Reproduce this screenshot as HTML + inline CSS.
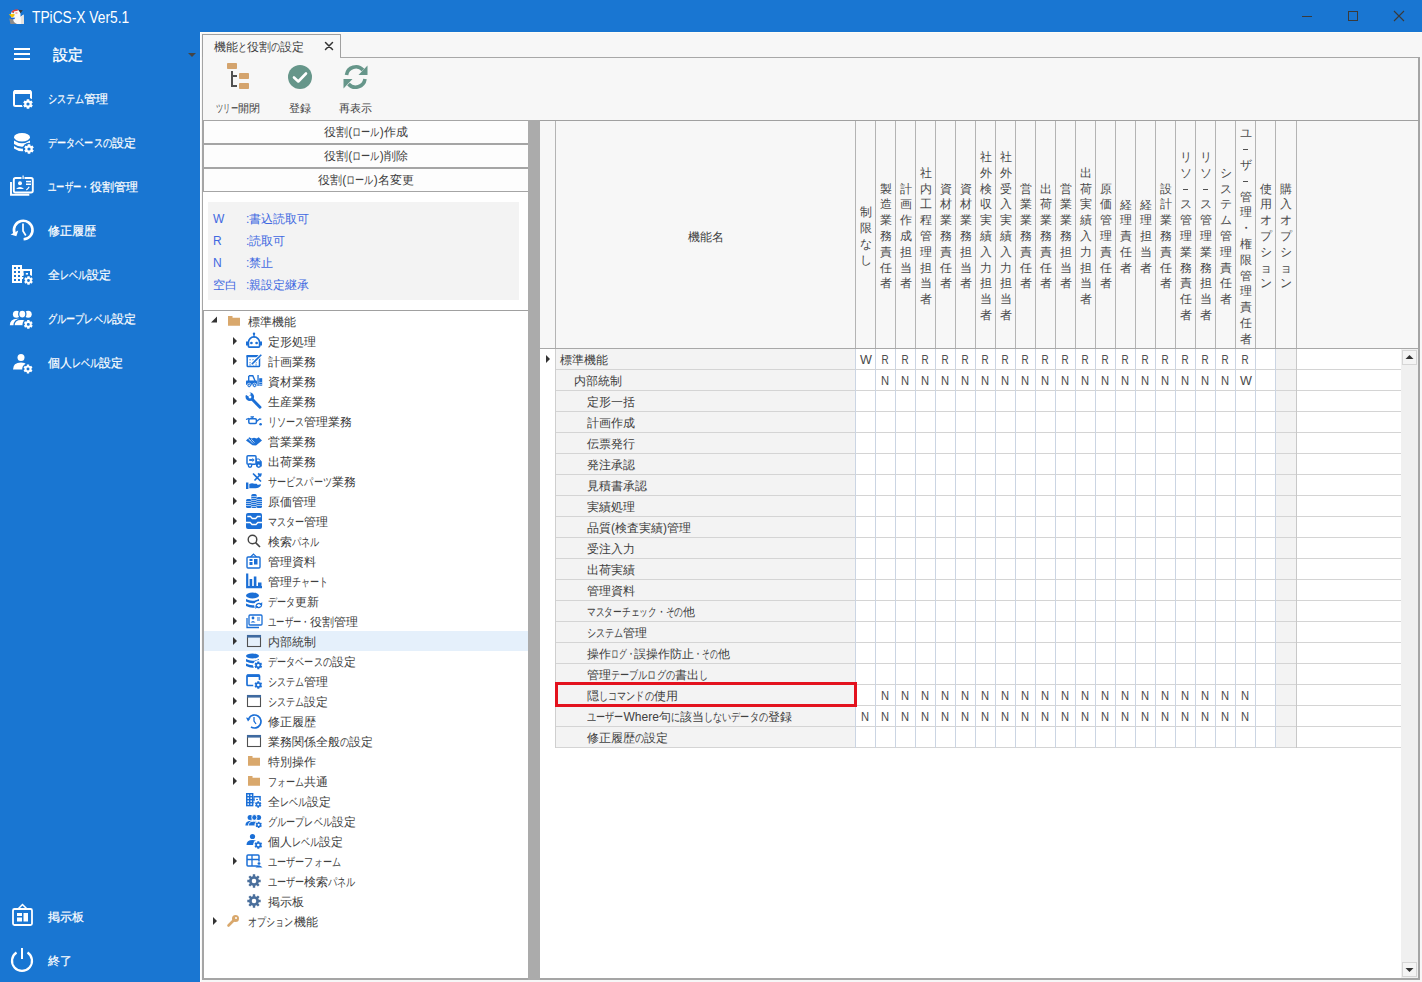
<!DOCTYPE html><html><head><meta charset="utf-8"><title>TPiCS-X</title><style>
*{box-sizing:border-box;margin:0;padding:0}
html,body{width:1422px;height:982px;overflow:hidden;background:#f7f7f7;font-family:"Liberation Sans", sans-serif;font-size:12px;color:#404040}
.a{position:absolute}
.t{position:absolute;white-space:nowrap;line-height:1}
svg{position:absolute;overflow:visible}
.k{display:inline-block;vertical-align:top;white-space:nowrap}
.k>span{display:inline-block;transform-origin:0 0}
.vt{position:absolute;width:20px;text-align:center;line-height:15.8px;font-size:12px;color:#4a4a4a}
</style></head><body><div class="a" style="left:0;top:0;width:1422px;height:32px;background:#1976d2"></div>
<div class="a" style="left:0;top:32px;width:200px;height:950px;background:#1976d2"></div>
<div class="t" style="left:32.0px;top:9.6px;font-size:16.0px;color:#fff;transform:scaleX(0.86);transform-origin:0 0">TPiCS-X Ver5.1</div>
<div class="t" style="left:53.0px;top:46.9px;font-size:15.3px;color:#fff;-webkit-text-stroke:0.35px #fff">設定</div>
<div class="t" style="left:48.0px;top:92.5px;font-size:12.0px;color:#fff;-webkit-text-stroke:0.2px #fff"><span class="k" style="width:36.48px"><span style="transform:scaleX(0.760)">システム</span></span>管理</div>
<div class="t" style="left:48.0px;top:136.5px;font-size:12.0px;color:#fff;-webkit-text-stroke:0.2px #fff"><span class="k" style="width:63.84px"><span style="transform:scaleX(0.760)">データベースの</span></span>設定</div>
<div class="t" style="left:48.0px;top:180.5px;font-size:12.0px;color:#fff;-webkit-text-stroke:0.2px #fff"><span class="k" style="width:41.52px"><span style="transform:scaleX(0.692)">ユーザー・</span></span>役割管理</div>
<div class="t" style="left:48.0px;top:224.5px;font-size:12.0px;color:#fff;-webkit-text-stroke:0.2px #fff">修正履歴</div>
<div class="t" style="left:48.0px;top:268.5px;font-size:12.0px;color:#fff;-webkit-text-stroke:0.2px #fff">全<span class="k" style="width:27.36px"><span style="transform:scaleX(0.760)">レベル</span></span>設定</div>
<div class="t" style="left:48.0px;top:312.5px;font-size:12.0px;color:#fff;-webkit-text-stroke:0.2px #fff"><span class="k" style="width:63.84px"><span style="transform:scaleX(0.760)">グループレベル</span></span>設定</div>
<div class="t" style="left:48.0px;top:356.5px;font-size:12.0px;color:#fff;-webkit-text-stroke:0.2px #fff">個人<span class="k" style="width:27.36px"><span style="transform:scaleX(0.760)">レベル</span></span>設定</div>
<div class="t" style="left:48.0px;top:910.5px;font-size:12.0px;color:#fff;-webkit-text-stroke:0.2px #fff">掲示板</div>
<div class="t" style="left:48.0px;top:954.5px;font-size:12.0px;color:#fff;-webkit-text-stroke:0.2px #fff">終了</div>
<svg class="a" style="left:0;top:0" width="1422" height="982" viewBox="0 0 1422 982"><path d="M11 24 L11 13 Q12 10 15 10 L18.5 10 Q20.5 11 20.5 14 L20.5 16.8 L23.6 14.6 L24 24 Z" fill="#fafafa"/><path d="M20.8 17 L23.6 14.6 L24 24 L21 24 Z" fill="#e6e3df"/><path d="M9.3 18.6 L13.2 19 Q13 22.3 17 24 L10.4 24 Z" fill="#8c8c8c"/><path d="M18.2 9.8 L22.8 10.3 L20.6 13.2 Z" fill="#3a3a3a"/><path d="M11.3 12.3 Q12.8 9.3 17.8 9.3 L17.8 10.8 Q14 10.9 12.5 12.8 Z" fill="#e43a3a"/><path d="M8.8 14.2 L14.6 14 L14.2 16.3 L11.8 17.6 Z" fill="#f6c200"/><path d="M10.2 17.6 L15.2 17.8 L14.2 19.2 L11 19 Z" fill="#1a62d4"/><circle cx="13.4" cy="12.6" r="0.7" fill="#666"/><ellipse cx="16.4" cy="13" rx="1.3" ry="0.7" fill="#f29090"/><line x1="1302" y1="16.5" x2="1312" y2="16.5" stroke="#3a3a3a" stroke-width="1"/><rect x="1348.5" y="11.5" width="9" height="9" fill="none" stroke="#3a3a3a" stroke-width="1"/><path d="M1394 11 L1404 21 M1404 11 L1394 21" stroke="#3a3a3a" stroke-width="1.1"/><rect x="14" y="48.0" width="16" height="2" fill="#fff"/><rect x="14" y="53.0" width="16" height="2" fill="#fff"/><rect x="14" y="58.0" width="16" height="2" fill="#fff"/><path d="M188 53 L196 53 L192 57 Z" fill="#444"/><rect x="14" y="91" width="17" height="15" rx="1.5" fill="none" stroke="#fff" stroke-width="2"/><rect x="14" y="90" width="17" height="4" rx="1" fill="#fff"/><circle cx="28.00" cy="104.00" r="6.20" fill="#1976d2"/><path fill-rule="evenodd" fill="#fff" d="M26.71 99.17 L29.29 99.17 L29.29 100.42 L30.45 101.10 L31.54 100.46 L32.83 102.71 L31.74 103.33 L31.74 104.67 L32.83 105.29 L31.54 107.54 L30.45 106.90 L29.29 107.58 L29.29 108.83 L26.71 108.83 L26.71 107.58 L25.55 106.90 L24.46 107.54 L23.17 105.29 L24.26 104.67 L24.26 103.33 L23.17 102.71 L24.46 100.46 L25.55 101.10 L26.71 100.42 Z M26.40 104.00 a1.60 1.60 0 1 0 3.20 0 a1.60 1.60 0 1 0 -3.20 0 Z"/><ellipse cx="22" cy="137.3" rx="8" ry="4.2" fill="#fff"/><path d="M14 140.5 Q22 146 30 140.5 L30 144 Q22 149.5 14 144 Z" fill="#fff"/><path d="M14 146 Q22 151.5 30 146 L30 148.5 Q22 154 14 148.5 Z" fill="#fff"/><circle cx="29.00" cy="149.00" r="6.20" fill="#1976d2"/><path fill-rule="evenodd" fill="#fff" d="M27.71 144.17 L30.29 144.17 L30.29 145.42 L31.45 146.10 L32.54 145.46 L33.83 147.71 L32.74 148.33 L32.74 149.67 L33.83 150.29 L32.54 152.54 L31.45 151.90 L30.29 152.58 L30.29 153.83 L27.71 153.83 L27.71 152.58 L26.55 151.90 L25.46 152.54 L24.17 150.29 L25.26 149.67 L25.26 148.33 L24.17 147.71 L25.46 145.46 L26.55 146.10 L27.71 145.42 Z M27.40 149.00 a1.60 1.60 0 1 0 3.20 0 a1.60 1.60 0 1 0 -3.20 0 Z"/><rect x="13.8" y="178" width="19" height="14.5" rx="1.8" fill="none" stroke="#fff" stroke-width="1.9"/><rect x="21.5" y="176" width="3" height="3.5" fill="#1976d2"/><rect x="22.5" y="175.5" width="1.2" height="3.5" fill="#fff"/><path d="M11 182 L11 194.8 L29.3 194.8" fill="none" stroke="#fff" stroke-width="1.9"/><circle cx="20" cy="183.2" r="2" fill="#fff"/><path d="M16 189 Q20 184.8 24 189 Z" fill="#fff"/><rect x="26" y="180.8" width="5" height="1.5" fill="#fff"/><rect x="26" y="183.5" width="5" height="1.5" fill="#fff"/><path d="M26.3 190 Q28 189 29.2 186.8" fill="none" stroke="#fff" stroke-width="1.2"/><path d="M23.6 239.3 A9.3 9.3 0 1 0 14.4 233" fill="none" stroke="#fff" stroke-width="2.6"/><path d="M10.6 234.6 L18.2 230.6 L16.4 236.2 Z" fill="#fff"/><path d="M23 223.5 L23 231 L25.8 235.5" fill="none" stroke="#fff" stroke-width="1.7"/><rect x="12" y="265" width="10" height="18" fill="#fff"/><rect x="14" y="267" width="2" height="2" fill="#1976d2"/><rect x="14" y="271" width="2" height="2" fill="#1976d2"/><rect x="14" y="275" width="2" height="2" fill="#1976d2"/><rect x="14" y="279" width="2" height="2" fill="#1976d2"/><rect x="18" y="267" width="2" height="2" fill="#1976d2"/><rect x="18" y="271" width="2" height="2" fill="#1976d2"/><rect x="18" y="275" width="2" height="2" fill="#1976d2"/><rect x="18" y="279" width="2" height="2" fill="#1976d2"/><rect x="22" y="269" width="10" height="7" fill="#fff"/><rect x="23.5" y="271" width="6.5" height="6" fill="#1976d2"/><rect x="25.8" y="273" width="2.2" height="1.6" fill="#fff"/><rect x="22" y="273" width="1.5" height="2" fill="#fff"/><rect x="22" y="277" width="1.5" height="2" fill="#fff"/><circle cx="28.50" cy="280.50" r="5.70" fill="#1976d2"/><path fill-rule="evenodd" fill="#fff" d="M27.34 276.15 L29.66 276.15 L29.66 277.28 L30.71 277.89 L31.68 277.32 L32.85 279.34 L31.87 279.89 L31.87 281.11 L32.85 281.66 L31.68 283.68 L30.71 283.11 L29.66 283.72 L29.66 284.85 L27.34 284.85 L27.34 283.72 L26.29 283.11 L25.32 283.68 L24.15 281.66 L25.13 281.11 L25.13 279.89 L24.15 279.34 L25.32 277.32 L26.29 277.89 L27.34 277.28 Z M27.06 280.50 a1.44 1.44 0 1 0 2.88 0 a1.44 1.44 0 1 0 -2.88 0 Z"/><circle cx="16.4" cy="314.2" r="3.5" fill="#fff"/><circle cx="28.2" cy="314.2" r="3.5" fill="#fff"/><ellipse cx="22.3" cy="314.1" rx="3.6" ry="4" fill="#fff" stroke="#1976d2" stroke-width="1.3"/><path d="M9.8 325.2 Q10 319.3 17 318.8 L19 318.8 Q15.3 320.5 15.3 325.2 Z" fill="#fff"/><path d="M14 325.8 Q14 319.3 21 319.3 L26.5 319.3 L24.2 325.8 Z" fill="#fff" stroke="#1976d2" stroke-width="1.2"/><circle cx="28.30" cy="324.40" r="5.80" fill="#1976d2"/><path fill-rule="evenodd" fill="#fff" d="M27.11 319.96 L29.49 319.96 L29.48 321.11 L30.56 321.73 L31.55 321.15 L32.74 323.21 L31.74 323.78 L31.74 325.02 L32.74 325.59 L31.55 327.65 L30.56 327.07 L29.48 327.69 L29.49 328.84 L27.11 328.84 L27.12 327.69 L26.04 327.07 L25.05 327.65 L23.86 325.59 L24.86 325.02 L24.86 323.78 L23.86 323.21 L25.05 321.15 L26.04 321.73 L27.12 321.11 Z M26.83 324.40 a1.47 1.47 0 1 0 2.94 0 a1.47 1.47 0 1 0 -2.94 0 Z"/><circle cx="21" cy="357.5" r="3.5" fill="#fff"/><path d="M13 369.5 Q13 362.5 21 362.5 Q25 362.5 26.5 364.5 L23 369.5 Z" fill="#fff"/><circle cx="28.00" cy="369.00" r="5.80" fill="#1976d2"/><path fill-rule="evenodd" fill="#fff" d="M26.81 364.56 L29.19 364.56 L29.18 365.71 L30.26 366.33 L31.25 365.75 L32.44 367.81 L31.44 368.38 L31.44 369.62 L32.44 370.19 L31.25 372.25 L30.26 371.67 L29.18 372.29 L29.19 373.44 L26.81 373.44 L26.82 372.29 L25.74 371.67 L24.75 372.25 L23.56 370.19 L24.56 369.62 L24.56 368.38 L23.56 367.81 L24.75 365.75 L25.74 366.33 L26.82 365.71 Z M26.53 369.00 a1.47 1.47 0 1 0 2.94 0 a1.47 1.47 0 1 0 -2.94 0 Z"/><rect x="13" y="909" width="19" height="16" rx="1.5" fill="none" stroke="#fff" stroke-width="1.8"/><path d="M18 909 L22.5 904.5 L27 909" fill="none" stroke="#fff" stroke-width="1.5"/><rect x="17" y="913" width="5" height="3" fill="#fff"/><rect x="17" y="917.5" width="5" height="4" fill="#fff"/><rect x="23.5" y="913" width="4.5" height="8.5" fill="#fff"/><path d="M16.5 952.5 A10 10 0 1 0 27.5 952.5" fill="none" stroke="#fff" stroke-width="2.2"/><line x1="22" y1="948" x2="22" y2="959" stroke="#fff" stroke-width="2"/></svg>
<div class="a" style="left:200px;top:32px;width:1222px;height:950px;background:#f7f7f7;border-left:1px solid #fff;border-top:1px solid #fffdf6"></div>
<div class="a" style="left:202px;top:34px;width:139px;height:24px;background:#f7f7f7;border:1px solid #a0a0a0;border-bottom:none"></div>
<div class="a" style="left:340px;top:57px;width:1080px;height:1px;background:#a8a8a8"></div>
<div class="a" style="left:1418px;top:57px;width:2px;height:923px;background:#a5a5a5"></div>
<div class="t" style="left:214.0px;top:41.0px;font-size:12.0px;color:#404040;">機能<span class="k" style="width:9.12px"><span style="transform:scaleX(0.760)">と</span></span>役割<span class="k" style="width:9.12px"><span style="transform:scaleX(0.760)">の</span></span>設定</div>
<div class="t" style="left:216.0px;top:103.2px;font-size:11.3px;"><span class="k" style="width:22.37px"><span style="transform:scaleX(0.660)">ツリー</span></span>開閉</div>
<div class="t" style="left:289.0px;top:103.2px;font-size:11.3px;">登録</div>
<div class="t" style="left:339.0px;top:103.2px;font-size:11.3px;">再表示</div>
<div class="a" style="left:202px;top:57px;width:1px;height:923px;background:#a5a5a5"></div>
<div class="a" style="left:203px;top:120px;width:326px;height:860px;background:#fff;border-bottom:2px solid #a5a5a5"></div>
<div class="a" style="left:203px;top:120px;width:326px;height:24px;background:#fdfdfd;border:1px solid #a5a5a5"></div>
<div class="t" style="left:203px;top:126px;width:326px;text-align:center;font-size:12px">役割(<span class="k" style="width:27.36px"><span style="transform:scaleX(0.760)">ロール</span></span>)作成</div>
<div class="a" style="left:203px;top:144px;width:326px;height:24px;background:#fdfdfd;border:1px solid #a5a5a5"></div>
<div class="t" style="left:203px;top:150px;width:326px;text-align:center;font-size:12px">役割(<span class="k" style="width:27.36px"><span style="transform:scaleX(0.760)">ロール</span></span>)削除</div>
<div class="a" style="left:203px;top:168px;width:326px;height:24px;background:#fdfdfd;border:1px solid #a5a5a5"></div>
<div class="t" style="left:203px;top:174px;width:326px;text-align:center;font-size:12px">役割(<span class="k" style="width:27.36px"><span style="transform:scaleX(0.760)">ロール</span></span>)名変更</div>
<div class="a" style="left:208px;top:202px;width:311px;height:98px;background:#f3f3f3"></div>
<div class="t" style="left:213.0px;top:212.5px;font-size:12.0px;color:#4169e1;">W</div>
<div class="t" style="left:246.0px;top:212.5px;font-size:12.0px;color:#4169e1;">:書込読取可</div>
<div class="t" style="left:213.0px;top:234.5px;font-size:12.0px;color:#4169e1;">R</div>
<div class="t" style="left:246.0px;top:234.5px;font-size:12.0px;color:#4169e1;">:読取可</div>
<div class="t" style="left:213.0px;top:256.5px;font-size:12.0px;color:#4169e1;">N</div>
<div class="t" style="left:246.0px;top:256.5px;font-size:12.0px;color:#4169e1;">:禁止</div>
<div class="t" style="left:213.0px;top:278.5px;font-size:12.0px;color:#4169e1;">空白</div>
<div class="t" style="left:246.0px;top:278.5px;font-size:12.0px;color:#4169e1;">:親設定継承</div>
<div class="a" style="left:203px;top:310px;width:326px;height:670px;border-top:1px solid #a0a0a0;border-left:1px solid #a5a5a5"></div>
<div class="a" style="left:204px;top:631px;width:324px;height:20px;background:#e5f0fb"></div>
<div class="t" style="left:248.0px;top:316.0px;font-size:12.0px;">標準機能</div>
<div class="t" style="left:268.0px;top:335.8px;font-size:12.0px;">定形処理</div>
<div class="t" style="left:268.0px;top:355.8px;font-size:12.0px;">計画業務</div>
<div class="t" style="left:268.0px;top:375.8px;font-size:12.0px;">資材業務</div>
<div class="t" style="left:268.0px;top:395.8px;font-size:12.0px;">生産業務</div>
<div class="t" style="left:268.0px;top:415.8px;font-size:12.0px;"><span class="k" style="width:36.48px"><span style="transform:scaleX(0.760)">リソース</span></span>管理業務</div>
<div class="t" style="left:268.0px;top:435.8px;font-size:12.0px;">営業業務</div>
<div class="t" style="left:268.0px;top:455.8px;font-size:12.0px;">出荷業務</div>
<div class="t" style="left:268.0px;top:475.8px;font-size:12.0px;"><span class="k" style="width:63.84px"><span style="transform:scaleX(0.760)">サービスパーツ</span></span>業務</div>
<div class="t" style="left:268.0px;top:495.8px;font-size:12.0px;">原価管理</div>
<div class="t" style="left:268.0px;top:515.8px;font-size:12.0px;"><span class="k" style="width:36.48px"><span style="transform:scaleX(0.760)">マスター</span></span>管理</div>
<div class="t" style="left:268.0px;top:535.8px;font-size:12.0px;">検索<span class="k" style="width:27.36px"><span style="transform:scaleX(0.760)">パネル</span></span></div>
<div class="t" style="left:268.0px;top:555.8px;font-size:12.0px;">管理資料</div>
<div class="t" style="left:268.0px;top:575.8px;font-size:12.0px;">管理<span class="k" style="width:36.48px"><span style="transform:scaleX(0.760)">チャート</span></span></div>
<div class="t" style="left:268.0px;top:595.8px;font-size:12.0px;"><span class="k" style="width:27.36px"><span style="transform:scaleX(0.760)">データ</span></span>更新</div>
<div class="t" style="left:268.0px;top:615.8px;font-size:12.0px;"><span class="k" style="width:41.52px"><span style="transform:scaleX(0.692)">ユーザー・</span></span>役割管理</div>
<div class="t" style="left:268.0px;top:635.8px;font-size:12.0px;">内部統制</div>
<div class="t" style="left:268.0px;top:655.8px;font-size:12.0px;"><span class="k" style="width:63.84px"><span style="transform:scaleX(0.760)">データベースの</span></span>設定</div>
<div class="t" style="left:268.0px;top:675.8px;font-size:12.0px;"><span class="k" style="width:36.48px"><span style="transform:scaleX(0.760)">システム</span></span>管理</div>
<div class="t" style="left:268.0px;top:695.8px;font-size:12.0px;"><span class="k" style="width:36.48px"><span style="transform:scaleX(0.760)">システム</span></span>設定</div>
<div class="t" style="left:268.0px;top:715.8px;font-size:12.0px;">修正履歴</div>
<div class="t" style="left:268.0px;top:735.8px;font-size:12.0px;">業務関係全般<span class="k" style="width:9.12px"><span style="transform:scaleX(0.760)">の</span></span>設定</div>
<div class="t" style="left:268.0px;top:755.8px;font-size:12.0px;">特別操作</div>
<div class="t" style="left:268.0px;top:775.8px;font-size:12.0px;"><span class="k" style="width:36.48px"><span style="transform:scaleX(0.760)">フォーム</span></span>共通</div>
<div class="t" style="left:268.0px;top:795.8px;font-size:12.0px;">全<span class="k" style="width:27.36px"><span style="transform:scaleX(0.760)">レベル</span></span>設定</div>
<div class="t" style="left:268.0px;top:815.8px;font-size:12.0px;"><span class="k" style="width:63.84px"><span style="transform:scaleX(0.760)">グループレベル</span></span>設定</div>
<div class="t" style="left:268.0px;top:835.8px;font-size:12.0px;">個人<span class="k" style="width:27.36px"><span style="transform:scaleX(0.760)">レベル</span></span>設定</div>
<div class="t" style="left:268.0px;top:855.8px;font-size:12.0px;"><span class="k" style="width:72.96px"><span style="transform:scaleX(0.760)">ユーザーフォーム</span></span></div>
<div class="t" style="left:268.0px;top:875.8px;font-size:12.0px;"><span class="k" style="width:36.48px"><span style="transform:scaleX(0.760)">ユーザー</span></span>検索<span class="k" style="width:27.36px"><span style="transform:scaleX(0.760)">パネル</span></span></div>
<div class="t" style="left:268.0px;top:895.8px;font-size:12.0px;">掲示板</div>
<div class="t" style="left:248.0px;top:915.8px;font-size:12.0px;"><span class="k" style="width:45.60px"><span style="transform:scaleX(0.760)">オプション</span></span>機能</div>
<div class="a" style="left:528px;top:120px;width:12px;height:860px;background:#ababab"></div>
<svg class="a" style="left:0;top:0" width="1422" height="982" viewBox="0 0 1422 982"><path d="M325.5 42.5 L332.5 49.5 M332.5 42.5 L325.5 49.5" stroke="#333" stroke-width="1.5" stroke-linecap="round"/><rect x="227" y="63" width="10" height="6" rx="0.8" fill="#d4a46e"/><rect x="239" y="73" width="10" height="6" rx="0.8" fill="#d4a46e"/><rect x="239" y="83" width="10" height="6" rx="0.8" fill="#d4a46e"/><path d="M232 71 L232 86 L237 86 M232 76 L237 76" fill="none" stroke="#505050" stroke-width="2"/><circle cx="300" cy="77" r="12" fill="#66968a"/><path d="M294 77.5 L298.3 81.5 L306 73.5" fill="none" stroke="#fff" stroke-width="2.6" stroke-linecap="round" stroke-linejoin="round"/><path d="M346.5 75 A9.5 9.5 0 0 1 363 70" fill="none" stroke="#66968a" stroke-width="3.6"/><path d="M367.5 65.5 L367.5 75 L358.5 75 Z" fill="#66968a"/><path d="M365 79 A9.5 9.5 0 0 1 348.5 84" fill="none" stroke="#66968a" stroke-width="3.6"/><path d="M343.5 88.5 L343.5 79 L352.5 79 Z" fill="#66968a"/><path d="M211 322.5 L217 316.5 L217 322.5 Z" fill="#333"/><path d="M228.0 316.0 h4.5 v1.8 h7.5 v8 h-12 Z" fill="#d9a86c"/><path d="M233.0 337.0 L237.0 341.0 L233.0 345.0 Z" fill="#333"/><path d="M233.0 357.0 L237.0 361.0 L233.0 365.0 Z" fill="#333"/><path d="M233.0 377.0 L237.0 381.0 L233.0 385.0 Z" fill="#333"/><path d="M233.0 397.0 L237.0 401.0 L233.0 405.0 Z" fill="#333"/><path d="M233.0 417.0 L237.0 421.0 L233.0 425.0 Z" fill="#333"/><path d="M233.0 437.0 L237.0 441.0 L233.0 445.0 Z" fill="#333"/><path d="M233.0 457.0 L237.0 461.0 L233.0 465.0 Z" fill="#333"/><path d="M233.0 477.0 L237.0 481.0 L233.0 485.0 Z" fill="#333"/><path d="M233.0 497.0 L237.0 501.0 L233.0 505.0 Z" fill="#333"/><path d="M233.0 517.0 L237.0 521.0 L233.0 525.0 Z" fill="#333"/><path d="M233.0 537.0 L237.0 541.0 L233.0 545.0 Z" fill="#333"/><path d="M233.0 557.0 L237.0 561.0 L233.0 565.0 Z" fill="#333"/><path d="M233.0 577.0 L237.0 581.0 L233.0 585.0 Z" fill="#333"/><path d="M233.0 597.0 L237.0 601.0 L233.0 605.0 Z" fill="#333"/><path d="M233.0 617.0 L237.0 621.0 L233.0 625.0 Z" fill="#333"/><path d="M233.0 637.0 L237.0 641.0 L233.0 645.0 Z" fill="#333"/><path d="M233.0 657.0 L237.0 661.0 L233.0 665.0 Z" fill="#333"/><path d="M233.0 677.0 L237.0 681.0 L233.0 685.0 Z" fill="#333"/><path d="M233.0 697.0 L237.0 701.0 L233.0 705.0 Z" fill="#333"/><path d="M233.0 717.0 L237.0 721.0 L233.0 725.0 Z" fill="#333"/><path d="M233.0 737.0 L237.0 741.0 L233.0 745.0 Z" fill="#333"/><path d="M233.0 757.0 L237.0 761.0 L233.0 765.0 Z" fill="#333"/><path d="M233.0 777.0 L237.0 781.0 L233.0 785.0 Z" fill="#333"/><path d="M233.0 857.0 L237.0 861.0 L233.0 865.0 Z" fill="#333"/><circle cx="254" cy="333.7" r="1.2" fill="#1b6fd6"/><line x1="254" y1="334.0" x2="254" y2="337.0" stroke="#1b6fd6" stroke-width="1.3"/><path d="M248.4 346.3 L248.4 342.5 A5.6 5.6 0 0 1 259.6 342.5 L259.6 346.3 Q259.6 347.2 258.6 347.2 L249.4 347.2 Q248.4 347.2 248.4 346.3 Z" fill="none" stroke="#1b6fd6" stroke-width="1.7"/><rect x="246" y="341.5" width="2" height="4" fill="#1b6fd6"/><rect x="260" y="341.5" width="2" height="4" fill="#1b6fd6"/><circle cx="251.4" cy="343.0" r="1.35" fill="#1b6fd6"/><circle cx="256.6" cy="343.0" r="1.35" fill="#1b6fd6"/><rect x="247.2" y="355.7" width="12.3" height="10.8" rx="0.8" fill="none" stroke="#1b6fd6" stroke-width="1.5"/><rect x="246.5" y="355.0" width="13.5" height="2.2" fill="#1b6fd6"/><rect x="249.3" y="359.0" width="1.6" height="1.4" fill="#1b6fd6" opacity="0.55"/><rect x="249.3" y="362.0" width="1.6" height="1.4" fill="#1b6fd6" opacity="0.55"/><rect x="249.3" y="364.2" width="1.6" height="1.4" fill="#1b6fd6" opacity="0.55"/><rect x="252.3" y="359.0" width="1.6" height="1.4" fill="#1b6fd6" opacity="0.55"/><rect x="252.3" y="362.0" width="1.6" height="1.4" fill="#1b6fd6" opacity="0.55"/><rect x="252.3" y="364.2" width="1.6" height="1.4" fill="#1b6fd6" opacity="0.55"/><rect x="255.3" y="359.0" width="1.6" height="1.4" fill="#1b6fd6" opacity="0.55"/><rect x="255.3" y="362.0" width="1.6" height="1.4" fill="#1b6fd6" opacity="0.55"/><rect x="255.3" y="364.2" width="1.6" height="1.4" fill="#1b6fd6" opacity="0.55"/><path d="M251.5 364.5 L261 355.0" stroke="#fff" stroke-width="3.2"/><path d="M251.8 364.2 L261.3 354.7" stroke="#1b6fd6" stroke-width="1.6"/><path d="M249 375.7 h3.8 l2.4 5.5" fill="none" stroke="#1b6fd6" stroke-width="1.4"/><path d="M248.7 375.7 v5.5" stroke="#1b6fd6" stroke-width="1.4"/><rect x="246" y="380.5" width="11" height="4.5" rx="0.8" fill="#1b6fd6"/><circle cx="249.2" cy="385.3" r="2.1" fill="#1b6fd6" stroke="#fff" stroke-width="0.6"/><circle cx="254.6" cy="385.3" r="2.1" fill="#1b6fd6" stroke="#fff" stroke-width="0.6"/><circle cx="249.2" cy="385.3" r="0.8" fill="#fff"/><circle cx="254.6" cy="385.3" r="0.8" fill="#fff"/><rect x="257.4" y="375.0" width="1.3" height="11" fill="#1b6fd6"/><rect x="259.2" y="378.2" width="3" height="7.5" fill="#1b6fd6"/><rect x="259.2" y="382.0" width="3" height="0.5" fill="#fff"/><rect x="259.2" y="384.0" width="3" height="0.5" fill="#fff"/><path d="M251.5 398.5 L260 407.3" stroke="#1b6fd6" stroke-width="2.9" stroke-linecap="round"/><circle cx="249.8" cy="396.8" r="4.3" fill="#1b6fd6"/><path d="M245.5 394.5 L248.5 396.5 L251 394.0 L249 391.5 Z" fill="#fff"/><circle cx="250" cy="397.0" r="1.4" fill="#fff"/><rect x="248.8" y="418.8" width="7.6" height="4.6" rx="1.2" fill="none" stroke="#1b6fd6" stroke-width="1.5"/><path d="M250.5 416.8 h3.5 M252.2 416.8 v2" stroke="#1b6fd6" stroke-width="1.3" fill="none"/><path d="M246 419.5 l3 -1.2 M256.4 421.5 l3.3 -2.6 l1.6 0.5" stroke="#1b6fd6" stroke-width="1.3" fill="none"/><circle cx="260.6" cy="424.2" r="1.3" fill="#1b6fd6"/><path d="M246 440.5 L249.3 437.2 L251.5 438.4 L254 437.7 L256.8 438.4 L258.7 437.2 L262 440.5 L256 445.6 L252.5 445.2 Z" fill="#1b6fd6"/><path d="M249.5 439.7 L253 443.5 M251.3 439.2 L254.5 442.6 M248.3 438.3 L250.4 440.8" stroke="#fff" stroke-width="0.7"/><rect x="247" y="455.7" width="9" height="8.6" rx="1" fill="none" stroke="#1b6fd6" stroke-width="1.5"/><rect x="249.2" y="459.1" width="3.3" height="1.8" fill="#1b6fd6"/><path d="M252.3 458.0 l2.4 2 l-2.4 2 Z" fill="#1b6fd6"/><path d="M256 458.5 h3 l2.8 3 v5 h-5.8 Z" fill="#1b6fd6"/><path d="M257 459.5 h1.7 l1.6 1.8 h-3.3 Z" fill="#fff"/><circle cx="250" cy="465.6" r="1.7" fill="#fff" stroke="#1b6fd6" stroke-width="1.4"/><circle cx="258.7" cy="465.6" r="1.7" fill="#fff" stroke="#1b6fd6" stroke-width="1.4"/><rect x="246" y="482.5" width="2.4" height="6.5" fill="#1b6fd6"/><path d="M249.3 484.0 q2.5 -1.2 5 -0.3 h2 q1 0 1 1 h-3.5 h5 q1.8 -1 2.3 0.3 q-2 3.2 -5.5 3.2 h-6.3 Z" fill="#1b6fd6"/><path d="M253 473.5 L261 481.5 M261.5 473.5 L254.5 480.5" stroke="#1b6fd6" stroke-width="1.6"/><path d="M258.8 472.8 l2.8 2.8 l-1.3 1.3 l-2.8 -2.8 Z" fill="#1b6fd6"/><rect x="246.0" y="499.0" width="5.4" height="9.0" rx="1.5" fill="#1b6fd6"/><rect x="246.0" y="501.0" width="5.4" height="0.6" fill="#fff"/><rect x="246.0" y="503.0" width="5.4" height="0.6" fill="#fff"/><rect x="246.0" y="505.0" width="5.4" height="0.6" fill="#fff"/><rect x="251.3" y="494.0" width="5.4" height="14.0" rx="1.5" fill="#1b6fd6"/><rect x="251.3" y="496.0" width="5.4" height="0.6" fill="#fff"/><rect x="251.3" y="498.0" width="5.4" height="0.6" fill="#fff"/><rect x="251.3" y="500.0" width="5.4" height="0.6" fill="#fff"/><rect x="251.3" y="502.0" width="5.4" height="0.6" fill="#fff"/><rect x="251.3" y="504.0" width="5.4" height="0.6" fill="#fff"/><rect x="251.3" y="506.0" width="5.4" height="0.6" fill="#fff"/><rect x="256.6" y="497.0" width="5.4" height="11.0" rx="1.5" fill="#1b6fd6"/><rect x="256.6" y="499.0" width="5.4" height="0.6" fill="#fff"/><rect x="256.6" y="501.0" width="5.4" height="0.6" fill="#fff"/><rect x="256.6" y="503.0" width="5.4" height="0.6" fill="#fff"/><rect x="256.6" y="505.0" width="5.4" height="0.6" fill="#fff"/><rect x="246" y="513.0" width="16" height="16" rx="2" fill="#1b6fd6"/><path d="M247.3 516.5 h3.2 l1.8 2 h3.4 l1.8 -2 h3.2 M246 522.5 h4.2 l1.8 2 h4 l1.8 -2 h4.2" fill="none" stroke="#fff" stroke-width="1.3"/><circle cx="252.5" cy="539.5" r="4.3" fill="none" stroke="#444" stroke-width="1.4"/><path d="M255.6 542.6 L260 547.0" stroke="#444" stroke-width="1.6"/><rect x="247" y="557.0" width="13" height="11" rx="1" fill="none" stroke="#1b6fd6" stroke-width="1.4"/><path d="M250.5 557.0 l3 -3 l3 3" fill="none" stroke="#1b6fd6" stroke-width="1.2"/><rect x="249.5" y="559.0" width="3" height="2" fill="#1b6fd6"/><rect x="249.5" y="562.0" width="3" height="3" fill="#1b6fd6"/><rect x="254" y="559.0" width="3.5" height="5.5" fill="#1b6fd6"/><path d="M247.2 573.5 v13.6 h14.8" fill="none" stroke="#1b6fd6" stroke-width="2.2"/><rect x="249.6" y="579.0" width="2.6" height="8" fill="#1b6fd6"/><rect x="253.8" y="576.5" width="2.6" height="10.5" fill="#1b6fd6"/><rect x="258" y="582.5" width="3.5" height="4.5" fill="#1b6fd6"/><ellipse cx="252.5" cy="595.5" rx="6.5" ry="3" fill="#1b6fd6"/><path d="M246 599.0 q6.5 3.5 13 0 v2.5 q-6.5 3.5 -13 0 Z M246 603.5 q6.5 3.5 13 0 v2.5 q-6.5 3.5 -13 0 Z" fill="#1b6fd6"/><circle cx="258.8" cy="605.5" r="4.6" fill="#fff"/><path d="M256 606.0 a3 3 0 0 1 5.2 -1.6 M261.6 605.0 a3 3 0 0 1 -5.2 1.6" fill="none" stroke="#1b6fd6" stroke-width="1.3"/><path d="M262.2 602.0 v3 h-3 Z M255.4 609.0 v-3 h3 Z" fill="#1b6fd6"/><rect x="249" y="615.0" width="13" height="10" rx="1" fill="none" stroke="#1b6fd6" stroke-width="1.3"/><path d="M247 618.0 v9.5 h12" fill="none" stroke="#1b6fd6" stroke-width="1.3"/><circle cx="253" cy="618.0" r="1.4" fill="#1b6fd6"/><path d="M250.5 622.5 q2.5 -3 5 0 Z" fill="#1b6fd6"/><rect x="257" y="617.5" width="3" height="1" fill="#1b6fd6"/><rect x="257" y="619.5" width="3" height="1" fill="#1b6fd6"/><rect x="247.5" y="635.5" width="13" height="11" fill="none" stroke="#505050" stroke-width="1.1"/><rect x="247" y="635.0" width="14" height="2.6" fill="#3f6aa0"/><ellipse cx="252.5" cy="656.0" rx="6.5" ry="2.5" fill="#1b6fd6"/><path d="M246 659.0 q6.5 3.5 13 0 v2.5 q-6.5 3.5 -13 0 Z M246 663.5 q6.5 3.5 13 0 v2.5 q-6.5 3.5 -13 0 Z" fill="#1b6fd6"/><circle cx="258.30" cy="665.30" r="5.20" fill="#fff"/><path fill-rule="evenodd" fill="#1b6fd6" d="M257.26 661.44 L259.34 661.44 L259.33 662.44 L260.26 662.98 L261.13 662.47 L262.16 664.26 L261.29 664.76 L261.29 665.84 L262.16 666.34 L261.13 668.13 L260.26 667.62 L259.33 668.16 L259.34 669.16 L257.26 669.16 L257.27 668.16 L256.34 667.62 L255.47 668.13 L254.44 666.34 L255.31 665.84 L255.31 664.76 L254.44 664.26 L255.47 662.47 L256.34 662.98 L257.27 662.44 Z M257.02 665.30 a1.28 1.28 0 1 0 2.56 0 a1.28 1.28 0 1 0 -2.56 0 Z"/><rect x="247" y="675.0" width="12.5" height="10.5" rx="1" fill="none" stroke="#1b6fd6" stroke-width="1.7"/><rect x="247" y="674.5" width="12.5" height="2.5" fill="#1b6fd6"/><circle cx="258.30" cy="685.00" r="5.20" fill="#fff"/><path fill-rule="evenodd" fill="#1b6fd6" d="M257.26 681.14 L259.34 681.14 L259.33 682.14 L260.26 682.68 L261.13 682.17 L262.16 683.96 L261.29 684.46 L261.29 685.54 L262.16 686.04 L261.13 687.83 L260.26 687.32 L259.33 687.86 L259.34 688.86 L257.26 688.86 L257.27 687.86 L256.34 687.32 L255.47 687.83 L254.44 686.04 L255.31 685.54 L255.31 684.46 L254.44 683.96 L255.47 682.17 L256.34 682.68 L257.27 682.14 Z M257.02 685.00 a1.28 1.28 0 1 0 2.56 0 a1.28 1.28 0 1 0 -2.56 0 Z"/><rect x="247.5" y="695.5" width="13" height="11" fill="none" stroke="#505050" stroke-width="1.1"/><rect x="247" y="695.0" width="14" height="2.6" fill="#3f6aa0"/><path d="M249 718.0 A6.5 6.5 0 1 1 251 727.0" fill="none" stroke="#1b6fd6" stroke-width="1.7"/><path d="M246 717.5 l4.5 1 l-2.5 3 Z" fill="#1b6fd6"/><path d="M254 717.0 v4 l2 3" fill="none" stroke="#1b6fd6" stroke-width="1.3"/><rect x="247.5" y="735.5" width="13" height="11" fill="none" stroke="#505050" stroke-width="1.1"/><rect x="247" y="735.0" width="14" height="2.6" fill="#3f6aa0"/><path d="M248.0 756.0 h4.5 v1.8 h7.5 v8 h-12 Z" fill="#d9a86c"/><path d="M248.0 776.0 h4.5 v1.8 h7.5 v8 h-12 Z" fill="#d9a86c"/><g transform="translate(237.12 596.90) scale(0.74)"><rect x="12" y="265" width="10" height="18" fill="#1b6fd6"/><rect x="14" y="267" width="2" height="2" fill="#fff"/><rect x="14" y="271" width="2" height="2" fill="#fff"/><rect x="14" y="275" width="2" height="2" fill="#fff"/><rect x="14" y="279" width="2" height="2" fill="#fff"/><rect x="18" y="267" width="2" height="2" fill="#fff"/><rect x="18" y="271" width="2" height="2" fill="#fff"/><rect x="18" y="275" width="2" height="2" fill="#fff"/><rect x="18" y="279" width="2" height="2" fill="#fff"/><rect x="22" y="269" width="10" height="7" fill="#1b6fd6"/><rect x="23.5" y="271" width="6.5" height="6" fill="#fff"/><rect x="25.8" y="273" width="2.2" height="1.6" fill="#1b6fd6"/><rect x="22" y="273" width="1.5" height="2" fill="#1b6fd6"/><rect x="22" y="277" width="1.5" height="2" fill="#1b6fd6"/><circle cx="28.50" cy="280.50" r="5.70" fill="#fff"/><path fill-rule="evenodd" fill="#1b6fd6" d="M27.34 276.15 L29.66 276.15 L29.66 277.28 L30.71 277.89 L31.68 277.32 L32.85 279.34 L31.87 279.89 L31.87 281.11 L32.85 281.66 L31.68 283.68 L30.71 283.11 L29.66 283.72 L29.66 284.85 L27.34 284.85 L27.34 283.72 L26.29 283.11 L25.32 283.68 L24.15 281.66 L25.13 281.11 L25.13 279.89 L24.15 279.34 L25.32 277.32 L26.29 277.89 L27.34 277.28 Z M27.06 280.50 a1.44 1.44 0 1 0 2.88 0 a1.44 1.44 0 1 0 -2.88 0 Z"/></g><g transform="translate(238.30 591.30) scale(0.72)"><circle cx="16.4" cy="314.2" r="3.5" fill="#1b6fd6"/><circle cx="28.2" cy="314.2" r="3.5" fill="#1b6fd6"/><ellipse cx="22.3" cy="314.1" rx="3.6" ry="4" fill="#1b6fd6" stroke="#fff" stroke-width="1.3"/><path d="M9.8 325.2 Q10 319.3 17 318.8 L19 318.8 Q15.3 320.5 15.3 325.2 Z" fill="#1b6fd6"/><path d="M14 325.8 Q14 319.3 21 319.3 L26.5 319.3 L24.2 325.8 Z" fill="#1b6fd6" stroke="#fff" stroke-width="1.2"/><circle cx="28.30" cy="324.40" r="5.80" fill="#fff"/><path fill-rule="evenodd" fill="#1b6fd6" d="M27.11 319.96 L29.49 319.96 L29.48 321.11 L30.56 321.73 L31.55 321.15 L32.74 323.21 L31.74 323.78 L31.74 325.02 L32.74 325.59 L31.55 327.65 L30.56 327.07 L29.48 327.69 L29.49 328.84 L27.11 328.84 L27.12 327.69 L26.04 327.07 L25.05 327.65 L23.86 325.59 L24.86 325.02 L24.86 323.78 L23.86 323.21 L25.05 321.15 L26.04 321.73 L27.12 321.11 Z M26.83 324.40 a1.47 1.47 0 1 0 2.94 0 a1.47 1.47 0 1 0 -2.94 0 Z"/></g><circle cx="252.5" cy="836.5" r="2.6" fill="#1b6fd6"/><path d="M246.5 845.0 q0-5 6-5 q3 0 4 1.5 l-3 3.5 Z" fill="#1b6fd6"/><circle cx="258.30" cy="845.00" r="5.20" fill="#fff"/><path fill-rule="evenodd" fill="#1b6fd6" d="M257.26 841.14 L259.34 841.14 L259.33 842.14 L260.26 842.68 L261.13 842.17 L262.16 843.96 L261.29 844.46 L261.29 845.54 L262.16 846.04 L261.13 847.83 L260.26 847.32 L259.33 847.86 L259.34 848.86 L257.26 848.86 L257.27 847.86 L256.34 847.32 L255.47 847.83 L254.44 846.04 L255.31 845.54 L255.31 844.46 L254.44 843.96 L255.47 842.17 L256.34 842.68 L257.27 842.14 Z M257.02 845.00 a1.28 1.28 0 1 0 2.56 0 a1.28 1.28 0 1 0 -2.56 0 Z"/><rect x="247" y="855.0" width="12" height="11" rx="1" fill="none" stroke="#1b6fd6" stroke-width="1.5"/><path d="M247 859.5 h12 M252 855.0 v11" stroke="#1b6fd6" stroke-width="1.3"/><circle cx="259" cy="863.5" r="1.8" fill="#1b6fd6" stroke="#fff" stroke-width="0.8"/><path d="M255.5 867.5 q3.5-4 7 0 Z" fill="#1b6fd6"/><path fill-rule="evenodd" fill="#4a6f9c" d="M252.80 874.31 L255.20 874.31 L255.19 876.14 L256.60 876.73 L257.89 875.42 L259.58 877.11 L258.27 878.40 L258.86 879.81 L260.69 879.80 L260.69 882.20 L258.86 882.19 L258.27 883.60 L259.58 884.89 L257.89 886.58 L256.60 885.27 L255.19 885.86 L255.20 887.69 L252.80 887.69 L252.81 885.86 L251.40 885.27 L250.11 886.58 L248.42 884.89 L249.73 883.60 L249.14 882.19 L247.31 882.20 L247.31 879.80 L249.14 879.81 L249.73 878.40 L248.42 877.11 L250.11 875.42 L251.40 876.73 L252.81 876.14 Z M251.70 881.00 a2.30 2.30 0 1 0 4.60 0 a2.30 2.30 0 1 0 -4.60 0 Z"/><path fill-rule="evenodd" fill="#4a6f9c" d="M252.80 894.31 L255.20 894.31 L255.19 896.14 L256.60 896.73 L257.89 895.42 L259.58 897.11 L258.27 898.40 L258.86 899.81 L260.69 899.80 L260.69 902.20 L258.86 902.19 L258.27 903.60 L259.58 904.89 L257.89 906.58 L256.60 905.27 L255.19 905.86 L255.20 907.69 L252.80 907.69 L252.81 905.86 L251.40 905.27 L250.11 906.58 L248.42 904.89 L249.73 903.60 L249.14 902.19 L247.31 902.20 L247.31 899.80 L249.14 899.81 L249.73 898.40 L248.42 897.11 L250.11 895.42 L251.40 896.73 L252.81 896.14 Z M251.70 901.00 a2.30 2.30 0 1 0 4.60 0 a2.30 2.30 0 1 0 -4.60 0 Z"/><path d="M213.0 917.0 L217.0 921.0 L213.0 925.0 Z" fill="#333"/><circle cx="235.5" cy="918.5" r="3.5" fill="#d9a86c"/><path d="M233.5 920.5 L228.5 925.5" stroke="#d9a86c" stroke-width="2.6" stroke-linecap="round"/><circle cx="236" cy="918.0" r="1" fill="#fff"/></svg>
<div class="a" style="left:540px;top:120px;width:880px;height:860px;background:#fff;border-top:1px solid #a0a0a0;border-right:2px solid #a5a5a5;border-bottom:2px solid #a5a5a5"></div>
<div class="a" style="left:540px;top:121px;width:878px;height:228px;background:#f7f7f7;border-bottom:1px solid #a8a8a8"></div>
<div class="t" style="left:688.0px;top:230.5px;font-size:12.0px;">機能名</div>
<div class="vt" style="left:855.5px;top:205.4px"><div>制</div><div>限</div><div>な</div><div>し</div></div>
<div class="vt" style="left:875.5px;top:181.7px"><div>製</div><div>造</div><div>業</div><div>務</div><div>責</div><div>任</div><div>者</div></div>
<div class="vt" style="left:895.5px;top:181.7px"><div>計</div><div>画</div><div>作</div><div>成</div><div>担</div><div>当</div><div>者</div></div>
<div class="vt" style="left:915.5px;top:165.9px"><div>社</div><div>内</div><div>工</div><div>程</div><div>管</div><div>理</div><div>担</div><div>当</div><div>者</div></div>
<div class="vt" style="left:935.5px;top:181.7px"><div>資</div><div>材</div><div>業</div><div>務</div><div>責</div><div>任</div><div>者</div></div>
<div class="vt" style="left:955.5px;top:181.7px"><div>資</div><div>材</div><div>業</div><div>務</div><div>担</div><div>当</div><div>者</div></div>
<div class="vt" style="left:975.5px;top:150.1px"><div>社</div><div>外</div><div>検</div><div>収</div><div>実</div><div>績</div><div>入</div><div>力</div><div>担</div><div>当</div><div>者</div></div>
<div class="vt" style="left:995.5px;top:150.1px"><div>社</div><div>外</div><div>受</div><div>入</div><div>実</div><div>績</div><div>入</div><div>力</div><div>担</div><div>当</div><div>者</div></div>
<div class="vt" style="left:1015.5px;top:181.7px"><div>営</div><div>業</div><div>業</div><div>務</div><div>責</div><div>任</div><div>者</div></div>
<div class="vt" style="left:1035.5px;top:181.7px"><div>出</div><div>荷</div><div>業</div><div>務</div><div>責</div><div>任</div><div>者</div></div>
<div class="vt" style="left:1055.5px;top:181.7px"><div>営</div><div>業</div><div>業</div><div>務</div><div>担</div><div>当</div><div>者</div></div>
<div class="vt" style="left:1075.5px;top:165.9px"><div>出</div><div>荷</div><div>実</div><div>績</div><div>入</div><div>力</div><div>担</div><div>当</div><div>者</div></div>
<div class="vt" style="left:1095.5px;top:181.7px"><div>原</div><div>価</div><div>管</div><div>理</div><div>責</div><div>任</div><div>者</div></div>
<div class="vt" style="left:1115.5px;top:197.5px"><div>経</div><div>理</div><div>責</div><div>任</div><div>者</div></div>
<div class="vt" style="left:1135.5px;top:197.5px"><div>経</div><div>理</div><div>担</div><div>当</div><div>者</div></div>
<div class="vt" style="left:1155.5px;top:181.7px"><div>設</div><div>計</div><div>業</div><div>務</div><div>責</div><div>任</div><div>者</div></div>
<div class="vt" style="left:1175.5px;top:150.1px"><div>リ</div><div>ソ</div><div><span style="display:inline-block;width:5.5px;height:1px;background:#505050;vertical-align:middle;margin-top:-1px"></span></div><div>ス</div><div>管</div><div>理</div><div>業</div><div>務</div><div>責</div><div>任</div><div>者</div></div>
<div class="vt" style="left:1195.5px;top:150.1px"><div>リ</div><div>ソ</div><div><span style="display:inline-block;width:5.5px;height:1px;background:#505050;vertical-align:middle;margin-top:-1px"></span></div><div>ス</div><div>管</div><div>理</div><div>業</div><div>務</div><div>担</div><div>当</div><div>者</div></div>
<div class="vt" style="left:1215.5px;top:165.9px"><div>シ</div><div>ス</div><div>テ</div><div>ム</div><div>管</div><div>理</div><div>責</div><div>任</div><div>者</div></div>
<div class="vt" style="left:1235.5px;top:126.4px"><div>ユ</div><div><span style="display:inline-block;width:5.5px;height:1px;background:#505050;vertical-align:middle;margin-top:-1px"></span></div><div>ザ</div><div><span style="display:inline-block;width:5.5px;height:1px;background:#505050;vertical-align:middle;margin-top:-1px"></span></div><div>管</div><div>理</div><div>・</div><div>権</div><div>限</div><div>管</div><div>理</div><div>責</div><div>任</div><div>者</div></div>
<div class="vt" style="left:1255.5px;top:181.7px"><div>使</div><div>用</div><div>オ</div><div>プ</div><div>シ</div><div>ョ</div><div>ン</div></div>
<div class="vt" style="left:1275.5px;top:181.7px"><div>購</div><div>入</div><div>オ</div><div>プ</div><div>シ</div><div>ョ</div><div>ン</div></div>
<svg class="a" style="left:0;top:0" width="1422" height="982" viewBox="0 0 1422 982"><rect x="555" y="121" width="1" height="227" fill="#b4b4b4"/><rect x="855" y="121" width="1" height="227" fill="#b4b4b4"/><rect x="875" y="121" width="1" height="227" fill="#b4b4b4"/><rect x="895" y="121" width="1" height="227" fill="#b4b4b4"/><rect x="915" y="121" width="1" height="227" fill="#b4b4b4"/><rect x="935" y="121" width="1" height="227" fill="#b4b4b4"/><rect x="955" y="121" width="1" height="227" fill="#b4b4b4"/><rect x="975" y="121" width="1" height="227" fill="#b4b4b4"/><rect x="995" y="121" width="1" height="227" fill="#b4b4b4"/><rect x="1015" y="121" width="1" height="227" fill="#b4b4b4"/><rect x="1035" y="121" width="1" height="227" fill="#b4b4b4"/><rect x="1055" y="121" width="1" height="227" fill="#b4b4b4"/><rect x="1075" y="121" width="1" height="227" fill="#b4b4b4"/><rect x="1095" y="121" width="1" height="227" fill="#b4b4b4"/><rect x="1115" y="121" width="1" height="227" fill="#b4b4b4"/><rect x="1135" y="121" width="1" height="227" fill="#b4b4b4"/><rect x="1155" y="121" width="1" height="227" fill="#b4b4b4"/><rect x="1175" y="121" width="1" height="227" fill="#b4b4b4"/><rect x="1195" y="121" width="1" height="227" fill="#b4b4b4"/><rect x="1215" y="121" width="1" height="227" fill="#b4b4b4"/><rect x="1235" y="121" width="1" height="227" fill="#b4b4b4"/><rect x="1255" y="121" width="1" height="227" fill="#b4b4b4"/><rect x="1275" y="121" width="1" height="227" fill="#b4b4b4"/><rect x="1296" y="121" width="1" height="227" fill="#b4b4b4"/><rect x="555" y="349" width="300" height="399" fill="#f3f3f3"/><rect x="1275" y="349" width="21" height="399" fill="#f3f3f3"/><rect x="555" y="369" width="846" height="1" fill="#d4d4d4"/><rect x="555" y="390" width="846" height="1" fill="#d4d4d4"/><rect x="555" y="411" width="846" height="1" fill="#d4d4d4"/><rect x="555" y="432" width="846" height="1" fill="#d4d4d4"/><rect x="555" y="453" width="846" height="1" fill="#d4d4d4"/><rect x="555" y="474" width="846" height="1" fill="#d4d4d4"/><rect x="555" y="495" width="846" height="1" fill="#d4d4d4"/><rect x="555" y="516" width="846" height="1" fill="#d4d4d4"/><rect x="555" y="537" width="846" height="1" fill="#d4d4d4"/><rect x="555" y="558" width="846" height="1" fill="#d4d4d4"/><rect x="555" y="579" width="846" height="1" fill="#d4d4d4"/><rect x="555" y="600" width="846" height="1" fill="#d4d4d4"/><rect x="555" y="621" width="846" height="1" fill="#d4d4d4"/><rect x="555" y="642" width="846" height="1" fill="#d4d4d4"/><rect x="555" y="663" width="846" height="1" fill="#d4d4d4"/><rect x="555" y="684" width="846" height="1" fill="#d4d4d4"/><rect x="555" y="705" width="846" height="1" fill="#d4d4d4"/><rect x="555" y="726" width="846" height="1" fill="#d4d4d4"/><rect x="555" y="747" width="846" height="1" fill="#d4d4d4"/><rect x="555" y="349" width="1" height="399" fill="#cfcfcf"/><rect x="855" y="349" width="1" height="399" fill="#cbd5e3"/><rect x="875" y="349" width="1" height="399" fill="#cbd5e3"/><rect x="895" y="349" width="1" height="399" fill="#cbd5e3"/><rect x="915" y="349" width="1" height="399" fill="#cbd5e3"/><rect x="935" y="349" width="1" height="399" fill="#cbd5e3"/><rect x="955" y="349" width="1" height="399" fill="#cbd5e3"/><rect x="975" y="349" width="1" height="399" fill="#cbd5e3"/><rect x="995" y="349" width="1" height="399" fill="#cbd5e3"/><rect x="1015" y="349" width="1" height="399" fill="#cbd5e3"/><rect x="1035" y="349" width="1" height="399" fill="#cbd5e3"/><rect x="1055" y="349" width="1" height="399" fill="#cbd5e3"/><rect x="1075" y="349" width="1" height="399" fill="#cbd5e3"/><rect x="1095" y="349" width="1" height="399" fill="#cbd5e3"/><rect x="1115" y="349" width="1" height="399" fill="#cbd5e3"/><rect x="1135" y="349" width="1" height="399" fill="#cbd5e3"/><rect x="1155" y="349" width="1" height="399" fill="#cbd5e3"/><rect x="1175" y="349" width="1" height="399" fill="#cbd5e3"/><rect x="1195" y="349" width="1" height="399" fill="#cbd5e3"/><rect x="1215" y="349" width="1" height="399" fill="#cbd5e3"/><rect x="1235" y="349" width="1" height="399" fill="#cbd5e3"/><rect x="1255" y="349" width="1" height="399" fill="#cbd5e3"/><rect x="1275" y="349" width="1" height="399" fill="#cbd5e3"/><rect x="1296" y="349" width="1" height="399" fill="#c8c8c8"/><path d="M546 355 L550 359 L546 363 Z" fill="#333"/><rect x="1401" y="349" width="17" height="629" fill="#f0f0f0"/><rect x="1402.5" y="350.5" width="14" height="14" fill="#f4f4f4" stroke="#d6d6d6" stroke-width="1"/><path d="M1405.5 359 L1413.5 359 L1409.5 355 Z" fill="#333"/><rect x="1402.5" y="962.5" width="14" height="14" fill="#f4f4f4" stroke="#d6d6d6" stroke-width="1"/><path d="M1405.5 968 L1413.5 968 L1409.5 972 Z" fill="#333"/></svg>
<div class="t" style="left:560.0px;top:353.5px;font-size:12.0px;">標準機能</div>
<div class="t" style="left:856px;top:353.0px;width:20px;text-align:center;font-size:13px;color:#4a4a4a;transform:scaleX(0.97)">W</div>
<div class="t" style="left:875px;top:353.0px;width:20px;text-align:center;font-size:13px;color:#4a4a4a;transform:scaleX(0.76)">R</div>
<div class="t" style="left:895px;top:353.0px;width:20px;text-align:center;font-size:13px;color:#4a4a4a;transform:scaleX(0.76)">R</div>
<div class="t" style="left:915px;top:353.0px;width:20px;text-align:center;font-size:13px;color:#4a4a4a;transform:scaleX(0.76)">R</div>
<div class="t" style="left:935px;top:353.0px;width:20px;text-align:center;font-size:13px;color:#4a4a4a;transform:scaleX(0.76)">R</div>
<div class="t" style="left:955px;top:353.0px;width:20px;text-align:center;font-size:13px;color:#4a4a4a;transform:scaleX(0.76)">R</div>
<div class="t" style="left:975px;top:353.0px;width:20px;text-align:center;font-size:13px;color:#4a4a4a;transform:scaleX(0.76)">R</div>
<div class="t" style="left:995px;top:353.0px;width:20px;text-align:center;font-size:13px;color:#4a4a4a;transform:scaleX(0.76)">R</div>
<div class="t" style="left:1015px;top:353.0px;width:20px;text-align:center;font-size:13px;color:#4a4a4a;transform:scaleX(0.76)">R</div>
<div class="t" style="left:1035px;top:353.0px;width:20px;text-align:center;font-size:13px;color:#4a4a4a;transform:scaleX(0.76)">R</div>
<div class="t" style="left:1055px;top:353.0px;width:20px;text-align:center;font-size:13px;color:#4a4a4a;transform:scaleX(0.76)">R</div>
<div class="t" style="left:1075px;top:353.0px;width:20px;text-align:center;font-size:13px;color:#4a4a4a;transform:scaleX(0.76)">R</div>
<div class="t" style="left:1095px;top:353.0px;width:20px;text-align:center;font-size:13px;color:#4a4a4a;transform:scaleX(0.76)">R</div>
<div class="t" style="left:1115px;top:353.0px;width:20px;text-align:center;font-size:13px;color:#4a4a4a;transform:scaleX(0.76)">R</div>
<div class="t" style="left:1135px;top:353.0px;width:20px;text-align:center;font-size:13px;color:#4a4a4a;transform:scaleX(0.76)">R</div>
<div class="t" style="left:1155px;top:353.0px;width:20px;text-align:center;font-size:13px;color:#4a4a4a;transform:scaleX(0.76)">R</div>
<div class="t" style="left:1175px;top:353.0px;width:20px;text-align:center;font-size:13px;color:#4a4a4a;transform:scaleX(0.76)">R</div>
<div class="t" style="left:1195px;top:353.0px;width:20px;text-align:center;font-size:13px;color:#4a4a4a;transform:scaleX(0.76)">R</div>
<div class="t" style="left:1215px;top:353.0px;width:20px;text-align:center;font-size:13px;color:#4a4a4a;transform:scaleX(0.76)">R</div>
<div class="t" style="left:1235px;top:353.0px;width:20px;text-align:center;font-size:13px;color:#4a4a4a;transform:scaleX(0.76)">R</div>
<div class="t" style="left:573.5px;top:374.5px;font-size:12.0px;">内部統制</div>
<div class="t" style="left:875px;top:374.0px;width:20px;text-align:center;font-size:13px;color:#4a4a4a;transform:scaleX(0.86)">N</div>
<div class="t" style="left:895px;top:374.0px;width:20px;text-align:center;font-size:13px;color:#4a4a4a;transform:scaleX(0.86)">N</div>
<div class="t" style="left:915px;top:374.0px;width:20px;text-align:center;font-size:13px;color:#4a4a4a;transform:scaleX(0.86)">N</div>
<div class="t" style="left:935px;top:374.0px;width:20px;text-align:center;font-size:13px;color:#4a4a4a;transform:scaleX(0.86)">N</div>
<div class="t" style="left:955px;top:374.0px;width:20px;text-align:center;font-size:13px;color:#4a4a4a;transform:scaleX(0.86)">N</div>
<div class="t" style="left:975px;top:374.0px;width:20px;text-align:center;font-size:13px;color:#4a4a4a;transform:scaleX(0.86)">N</div>
<div class="t" style="left:995px;top:374.0px;width:20px;text-align:center;font-size:13px;color:#4a4a4a;transform:scaleX(0.86)">N</div>
<div class="t" style="left:1015px;top:374.0px;width:20px;text-align:center;font-size:13px;color:#4a4a4a;transform:scaleX(0.86)">N</div>
<div class="t" style="left:1035px;top:374.0px;width:20px;text-align:center;font-size:13px;color:#4a4a4a;transform:scaleX(0.86)">N</div>
<div class="t" style="left:1055px;top:374.0px;width:20px;text-align:center;font-size:13px;color:#4a4a4a;transform:scaleX(0.86)">N</div>
<div class="t" style="left:1075px;top:374.0px;width:20px;text-align:center;font-size:13px;color:#4a4a4a;transform:scaleX(0.86)">N</div>
<div class="t" style="left:1095px;top:374.0px;width:20px;text-align:center;font-size:13px;color:#4a4a4a;transform:scaleX(0.86)">N</div>
<div class="t" style="left:1115px;top:374.0px;width:20px;text-align:center;font-size:13px;color:#4a4a4a;transform:scaleX(0.86)">N</div>
<div class="t" style="left:1135px;top:374.0px;width:20px;text-align:center;font-size:13px;color:#4a4a4a;transform:scaleX(0.86)">N</div>
<div class="t" style="left:1155px;top:374.0px;width:20px;text-align:center;font-size:13px;color:#4a4a4a;transform:scaleX(0.86)">N</div>
<div class="t" style="left:1175px;top:374.0px;width:20px;text-align:center;font-size:13px;color:#4a4a4a;transform:scaleX(0.86)">N</div>
<div class="t" style="left:1195px;top:374.0px;width:20px;text-align:center;font-size:13px;color:#4a4a4a;transform:scaleX(0.86)">N</div>
<div class="t" style="left:1215px;top:374.0px;width:20px;text-align:center;font-size:13px;color:#4a4a4a;transform:scaleX(0.86)">N</div>
<div class="t" style="left:1236px;top:374.0px;width:20px;text-align:center;font-size:13px;color:#4a4a4a;transform:scaleX(0.97)">W</div>
<div class="t" style="left:587.0px;top:395.5px;font-size:12.0px;">定形一括</div>
<div class="t" style="left:587.0px;top:416.5px;font-size:12.0px;">計画作成</div>
<div class="t" style="left:587.0px;top:437.5px;font-size:12.0px;">伝票発行</div>
<div class="t" style="left:587.0px;top:458.5px;font-size:12.0px;">発注承認</div>
<div class="t" style="left:587.0px;top:479.5px;font-size:12.0px;">見積書承認</div>
<div class="t" style="left:587.0px;top:500.5px;font-size:12.0px;">実績処理</div>
<div class="t" style="left:587.0px;top:521.5px;font-size:12.0px;">品質(検査実績)管理</div>
<div class="t" style="left:587.0px;top:542.5px;font-size:12.0px;">受注入力</div>
<div class="t" style="left:587.0px;top:563.5px;font-size:12.0px;">出荷実績</div>
<div class="t" style="left:587.0px;top:584.5px;font-size:12.0px;">管理資料</div>
<div class="t" style="left:587.0px;top:605.5px;font-size:12.0px;"><span class="k" style="width:96.24px"><span style="transform:scaleX(0.729)">マスターチェック・その</span></span>他</div>
<div class="t" style="left:587.0px;top:626.5px;font-size:12.0px;"><span class="k" style="width:36.48px"><span style="transform:scaleX(0.760)">システム</span></span>管理</div>
<div class="t" style="left:587.0px;top:647.5px;font-size:12.0px;">操作<span class="k" style="width:23.28px"><span style="transform:scaleX(0.647)">ログ・</span></span>誤操作防止<span class="k" style="width:23.28px"><span style="transform:scaleX(0.647)">・その</span></span>他</div>
<div class="t" style="left:587.0px;top:668.5px;font-size:12.0px;">管理<span class="k" style="width:63.84px"><span style="transform:scaleX(0.760)">テーブルログの</span></span>書出<span class="k" style="width:9.12px"><span style="transform:scaleX(0.760)">し</span></span></div>
<div class="t" style="left:587.0px;top:689.5px;font-size:12.0px;">隠<span class="k" style="width:54.72px"><span style="transform:scaleX(0.760)">しコマンドの</span></span>使用</div>
<div class="t" style="left:875px;top:689.0px;width:20px;text-align:center;font-size:13px;color:#4a4a4a;transform:scaleX(0.86)">N</div>
<div class="t" style="left:895px;top:689.0px;width:20px;text-align:center;font-size:13px;color:#4a4a4a;transform:scaleX(0.86)">N</div>
<div class="t" style="left:915px;top:689.0px;width:20px;text-align:center;font-size:13px;color:#4a4a4a;transform:scaleX(0.86)">N</div>
<div class="t" style="left:935px;top:689.0px;width:20px;text-align:center;font-size:13px;color:#4a4a4a;transform:scaleX(0.86)">N</div>
<div class="t" style="left:955px;top:689.0px;width:20px;text-align:center;font-size:13px;color:#4a4a4a;transform:scaleX(0.86)">N</div>
<div class="t" style="left:975px;top:689.0px;width:20px;text-align:center;font-size:13px;color:#4a4a4a;transform:scaleX(0.86)">N</div>
<div class="t" style="left:995px;top:689.0px;width:20px;text-align:center;font-size:13px;color:#4a4a4a;transform:scaleX(0.86)">N</div>
<div class="t" style="left:1015px;top:689.0px;width:20px;text-align:center;font-size:13px;color:#4a4a4a;transform:scaleX(0.86)">N</div>
<div class="t" style="left:1035px;top:689.0px;width:20px;text-align:center;font-size:13px;color:#4a4a4a;transform:scaleX(0.86)">N</div>
<div class="t" style="left:1055px;top:689.0px;width:20px;text-align:center;font-size:13px;color:#4a4a4a;transform:scaleX(0.86)">N</div>
<div class="t" style="left:1075px;top:689.0px;width:20px;text-align:center;font-size:13px;color:#4a4a4a;transform:scaleX(0.86)">N</div>
<div class="t" style="left:1095px;top:689.0px;width:20px;text-align:center;font-size:13px;color:#4a4a4a;transform:scaleX(0.86)">N</div>
<div class="t" style="left:1115px;top:689.0px;width:20px;text-align:center;font-size:13px;color:#4a4a4a;transform:scaleX(0.86)">N</div>
<div class="t" style="left:1135px;top:689.0px;width:20px;text-align:center;font-size:13px;color:#4a4a4a;transform:scaleX(0.86)">N</div>
<div class="t" style="left:1155px;top:689.0px;width:20px;text-align:center;font-size:13px;color:#4a4a4a;transform:scaleX(0.86)">N</div>
<div class="t" style="left:1175px;top:689.0px;width:20px;text-align:center;font-size:13px;color:#4a4a4a;transform:scaleX(0.86)">N</div>
<div class="t" style="left:1195px;top:689.0px;width:20px;text-align:center;font-size:13px;color:#4a4a4a;transform:scaleX(0.86)">N</div>
<div class="t" style="left:1215px;top:689.0px;width:20px;text-align:center;font-size:13px;color:#4a4a4a;transform:scaleX(0.86)">N</div>
<div class="t" style="left:1235px;top:689.0px;width:20px;text-align:center;font-size:13px;color:#4a4a4a;transform:scaleX(0.86)">N</div>
<div class="t" style="left:587.0px;top:710.5px;font-size:12.0px;"><span class="k" style="width:36.48px"><span style="transform:scaleX(0.760)">ユーザー</span></span>Where句<span class="k" style="width:9.12px"><span style="transform:scaleX(0.760)">に</span></span>該当<span class="k" style="width:63.84px"><span style="transform:scaleX(0.760)">しないデータの</span></span>登録</div>
<div class="t" style="left:855px;top:710.0px;width:20px;text-align:center;font-size:13px;color:#4a4a4a;transform:scaleX(0.86)">N</div>
<div class="t" style="left:875px;top:710.0px;width:20px;text-align:center;font-size:13px;color:#4a4a4a;transform:scaleX(0.86)">N</div>
<div class="t" style="left:895px;top:710.0px;width:20px;text-align:center;font-size:13px;color:#4a4a4a;transform:scaleX(0.86)">N</div>
<div class="t" style="left:915px;top:710.0px;width:20px;text-align:center;font-size:13px;color:#4a4a4a;transform:scaleX(0.86)">N</div>
<div class="t" style="left:935px;top:710.0px;width:20px;text-align:center;font-size:13px;color:#4a4a4a;transform:scaleX(0.86)">N</div>
<div class="t" style="left:955px;top:710.0px;width:20px;text-align:center;font-size:13px;color:#4a4a4a;transform:scaleX(0.86)">N</div>
<div class="t" style="left:975px;top:710.0px;width:20px;text-align:center;font-size:13px;color:#4a4a4a;transform:scaleX(0.86)">N</div>
<div class="t" style="left:995px;top:710.0px;width:20px;text-align:center;font-size:13px;color:#4a4a4a;transform:scaleX(0.86)">N</div>
<div class="t" style="left:1015px;top:710.0px;width:20px;text-align:center;font-size:13px;color:#4a4a4a;transform:scaleX(0.86)">N</div>
<div class="t" style="left:1035px;top:710.0px;width:20px;text-align:center;font-size:13px;color:#4a4a4a;transform:scaleX(0.86)">N</div>
<div class="t" style="left:1055px;top:710.0px;width:20px;text-align:center;font-size:13px;color:#4a4a4a;transform:scaleX(0.86)">N</div>
<div class="t" style="left:1075px;top:710.0px;width:20px;text-align:center;font-size:13px;color:#4a4a4a;transform:scaleX(0.86)">N</div>
<div class="t" style="left:1095px;top:710.0px;width:20px;text-align:center;font-size:13px;color:#4a4a4a;transform:scaleX(0.86)">N</div>
<div class="t" style="left:1115px;top:710.0px;width:20px;text-align:center;font-size:13px;color:#4a4a4a;transform:scaleX(0.86)">N</div>
<div class="t" style="left:1135px;top:710.0px;width:20px;text-align:center;font-size:13px;color:#4a4a4a;transform:scaleX(0.86)">N</div>
<div class="t" style="left:1155px;top:710.0px;width:20px;text-align:center;font-size:13px;color:#4a4a4a;transform:scaleX(0.86)">N</div>
<div class="t" style="left:1175px;top:710.0px;width:20px;text-align:center;font-size:13px;color:#4a4a4a;transform:scaleX(0.86)">N</div>
<div class="t" style="left:1195px;top:710.0px;width:20px;text-align:center;font-size:13px;color:#4a4a4a;transform:scaleX(0.86)">N</div>
<div class="t" style="left:1215px;top:710.0px;width:20px;text-align:center;font-size:13px;color:#4a4a4a;transform:scaleX(0.86)">N</div>
<div class="t" style="left:1235px;top:710.0px;width:20px;text-align:center;font-size:13px;color:#4a4a4a;transform:scaleX(0.86)">N</div>
<div class="t" style="left:587.0px;top:731.5px;font-size:12.0px;">修正履歴<span class="k" style="width:9.12px"><span style="transform:scaleX(0.760)">の</span></span>設定</div>
<svg class="a" style="left:0;top:0" width="1422" height="982" viewBox="0 0 1422 982"><rect x="556.5" y="683.5" width="299" height="22" fill="none" stroke="#e3121e" stroke-width="3"/></svg></body></html>
